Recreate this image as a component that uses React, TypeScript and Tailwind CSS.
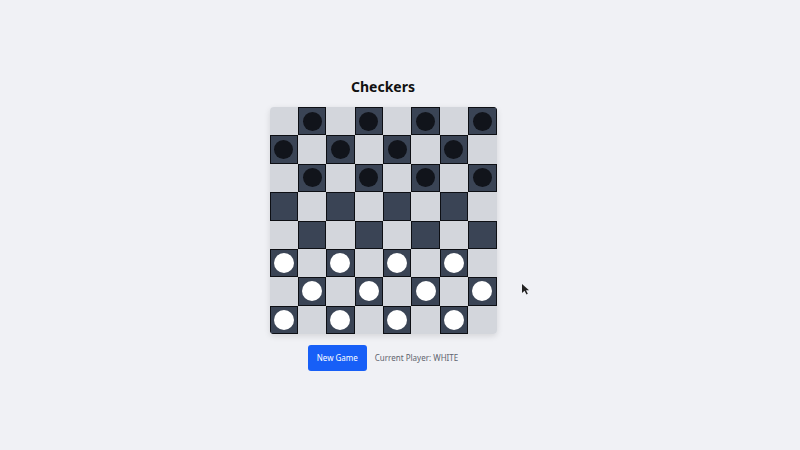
import { useState } from "react";

type Piece = "black" | "white" | null;

// starting position: black on top three rows, white on bottom three
const initialBoard = (): Piece[][] =>
  Array.from({ length: 8 }, (_, r) =>
    Array.from({ length: 8 }, (_, c) => {
      if ((r + c) % 2 === 0) return null;
      if (r < 3) return "black";
      if (r > 4) return "white";
      return null;
    })
  );

const App = () => {
  const [board, setBoard] = useState<Piece[][]>(initialBoard());
  const [player, setPlayer] = useState<"WHITE" | "BLACK">("WHITE");

  const reset = () => {
    setBoard(initialBoard());
    setPlayer("WHITE");
  };

  return (
    <div
      className="relative w-full h-[450px] bg-[#f0f1f5] flex flex-col items-center pt-[77px] pr-[34px]"
      style={{ fontFamily: "'Noto Sans', 'Open Sans', sans-serif" }}
    >
      <h1 className="text-[14px] font-bold text-[#111] leading-5 mb-[10px]">
        Checkers
      </h1>
      <div className="w-[227px] h-[227px] grid grid-cols-8 grid-rows-8 rounded-[4px] overflow-hidden shadow-[0_2px_6px_rgba(0,0,0,0.12)]">
        {board.map((row, r) =>
          row.map((piece, c) => {
            const dark = (r + c) % 2 === 1;
            return (
              <div
                key={`${r}-${c}`}
                className={
                  dark
                    ? "bg-[#3a4455] border-[1.5px] border-[#0d0f14] flex items-center justify-center"
                    : "bg-[#d3d6dc] flex items-center justify-center"
                }
              >
                {piece === "black" && (
                  <div className="w-[19px] h-[19px] rounded-full bg-[#11141b]" />
                )}
                {piece === "white" && (
                  <div className="w-[20px] h-[20px] rounded-full bg-white" />
                )}
              </div>
            );
          })
        )}
      </div>
      <div className="flex items-center gap-2 mt-[11px]">
        <button
          onClick={reset}
          className="w-[59px] h-[26px] rounded-[3px] bg-[#175ff7] text-white text-[8px] leading-none"
        >
          New Game
        </button>
        <span className="text-[8px] text-[#60646e]">Current Player: {player}</span>
      </div>
      {/* mouse pointer seen in screenshot */}
      <svg
        className="absolute left-[521px] top-[283px]"
        width="9"
        height="12"
        viewBox="0 0 9 12"
      >
        <path d="M1 1 L1 10 L3.5 7.8 L5.5 11.5 L6.8 10.8 L5 7.3 L8 7.2 Z" fill="#222" />
      </svg>
    </div>
  );
};

export default App;
